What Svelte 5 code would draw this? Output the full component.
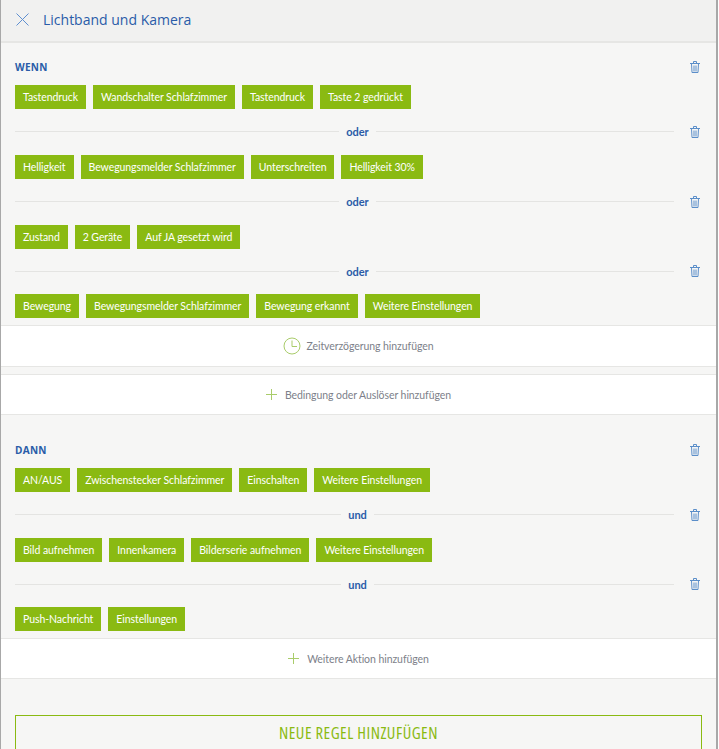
<script>
  const whenRows = [
    ['Tastendruck', 'Wandschalter Schlafzimmer', 'Tastendruck', 'Taste 2 gedrückt'],
    ['Helligkeit', 'Bewegungsmelder Schlafzimmer', 'Unterschreiten', 'Helligkeit 30%'],
    ['Zustand', '2 Geräte', 'Auf JA gesetzt wird'],
    ['Bewegung', 'Bewegungsmelder Schlafzimmer', 'Bewegung erkannt', 'Weitere Einstellungen']
  ];
  const thenRows = [
    ['AN/AUS', 'Zwischenstecker Schlafzimmer', 'Einschalten', 'Weitere Einstellungen'],
    ['Bild aufnehmen', 'Innenkamera', 'Bilderserie aufnehmen', 'Weitere Einstellungen'],
    ['Push-Nachricht', 'Einstellungen']
  ];
</script>

{#snippet trash()}
  <svg class="trash" width="10" height="12" viewBox="0 0 10 12" fill="none" stroke="#5b8ec9" stroke-width="1">
    <path d="M0 2.5h10M3.5 2.5V0.5h3v2M1.5 2.5l.5 9h6l.5-9M4 4.5v6M6 4.5v6" />
  </svg>
{/snippet}

{#snippet plus()}
  <svg width="11" height="11" viewBox="0 0 11 11" stroke="#a9cc6a" stroke-width="1">
    <path d="M5.5 0v11M0 5.5h11" />
  </svg>
{/snippet}

{#snippet block(title, rows, word)}
  <div class="title-row">
    <span class="title">{title}</span>
    {@render trash()}
  </div>
  {#each rows as row, i}
    {#if i > 0}
      <div class="sep">
        <span class="line"></span>
        <span class="word">{word}</span>
        <div class="sep-end">
          <span class="line"></span>
          {@render trash()}
        </div>
      </div>
    {/if}
    <div class="chips">
      {#each row as chip}
        <span class="chip">{chip}</span>
      {/each}
    </div>
  {/each}
{/snippet}

<div class="page">
  <header>
    <svg width="13" height="13" viewBox="0 0 13 13" stroke="#5f8fd0" stroke-width="1" fill="none">
      <path d="M0.5 0.5l12 12M12.5 0.5l-12 12" />
    </svg>
    <h1>Lichtband und Kamera</h1>
  </header>

  <section class="when">
    {@render block('WENN', whenRows, 'oder')}
  </section>
  <button class="add first">
    <svg class="clock" width="18" height="18" viewBox="0 0 18 18" fill="none" stroke="#a9cc6a" stroke-width="1">
      <circle cx="9" cy="9" r="8" />
      <path d="M9 3.5V9.5H14" />
    </svg>
    Zeitverzögerung hinzufügen
  </button>
  <button class="add second">
    {@render plus()}
    Bedingung oder Auslöser hinzufügen
  </button>

  <section class="then">
    {@render block('DANN', thenRows, 'und')}
  </section>
  <button class="add third">
    {@render plus()}
    Weitere Aktion hinzufügen
  </button>

  <div class="footer">
    <button class="new-rule">NEUE REGEL HINZUFÜGEN</button>
  </div>
</div>

<style>
  :global(body) {
    background: #fff;
    overflow: hidden;
  }

  .page {
    width: 715px;
    height: 749px;
    overflow: hidden;
    background: #f6f6f5;
    border-left: 1px solid #a8a8a8;
    border-right: 2px solid #a8a8a8;
    font-family: Lato, "Open Sans", sans-serif;
    font-size: 10.5px;
    letter-spacing: -0.07px;
  }

  header {
    height: 39px;
    padding-bottom: 2px;
    display: flex;
    align-items: center;
    gap: 14px;
    padding-left: 15px;
    background: #f1f1f0;
    border-bottom: 2px solid #e6e6e4;
  }

  h1 {
    margin: 0;
    font-family: "Open Sans", sans-serif;
    font-size: 14px;
    font-weight: 400;
    letter-spacing: 0;
    color: #2a5ca8;
  }

  section {
    padding: 0 16px 0 14px;
  }

  .when {
    padding-top: 17px;
  }

  .then {
    padding-top: 27.5px;
  }

  .title-row {
    height: 14px;
    margin-bottom: 11px;
    display: flex;
    align-items: center;
    justify-content: space-between;
  }

  .title {
    font-family: "Open Sans", sans-serif;
    font-size: 10px;
    font-weight: 700;
    color: #2a5ca8;
    letter-spacing: 0.3px;
  }

  .trash {
    flex: none;
  }

  .chips {
    display: flex;
    gap: 7px;
    height: 24px;
  }

  .chip {
    padding: 0 8px;
    line-height: 24px;
    background: #8aba12;
    color: #fff;
    white-space: nowrap;
  }

  .sep {
    display: grid;
    grid-template-columns: 1fr auto 1fr;
    align-items: center;
    height: 45.75px;
  }

  .sep-end {
    display: flex;
    align-items: center;
    gap: 16px;
  }

  .line {
    flex: 1;
    height: 1px;
    background: #e4e4e2;
  }

  .word {
    padding: 0 7px;
    font-size: 11px;
    font-weight: 700;
    color: #2a5ca8;
  }

  .add {
    display: flex;
    align-items: center;
    justify-content: center;
    width: 100%;
    height: 41px;
    padding: 0;
    font: inherit;
    letter-spacing: inherit;
    color: #7d7f8a;
    background: #fff;
    border: 0;
    border-top: 1px solid #e6e6e4;
    border-bottom: 1px solid #e6e6e4;
  }

  .add svg {
    margin-right: 8px;
  }

  .add .clock {
    margin-right: 5px;
  }

  .first {
    height: 42px;
    margin-top: 7px;
  }

  .second {
    margin-top: 7px;
  }

  .third {
    margin-top: 7px;
  }

  .footer {
    padding: 36px 14px 0;
  }

  .new-rule {
    width: 100%;
    height: 48px;
    padding: 0 0 13px;
    font-family: "Open Sans", sans-serif;
    font-size: 16.5px;
    font-stretch: 75%;
    letter-spacing: 0.5px;
    color: #8aba12;
    background: none;
    border: 1px solid #8aba12;
  }
</style>
